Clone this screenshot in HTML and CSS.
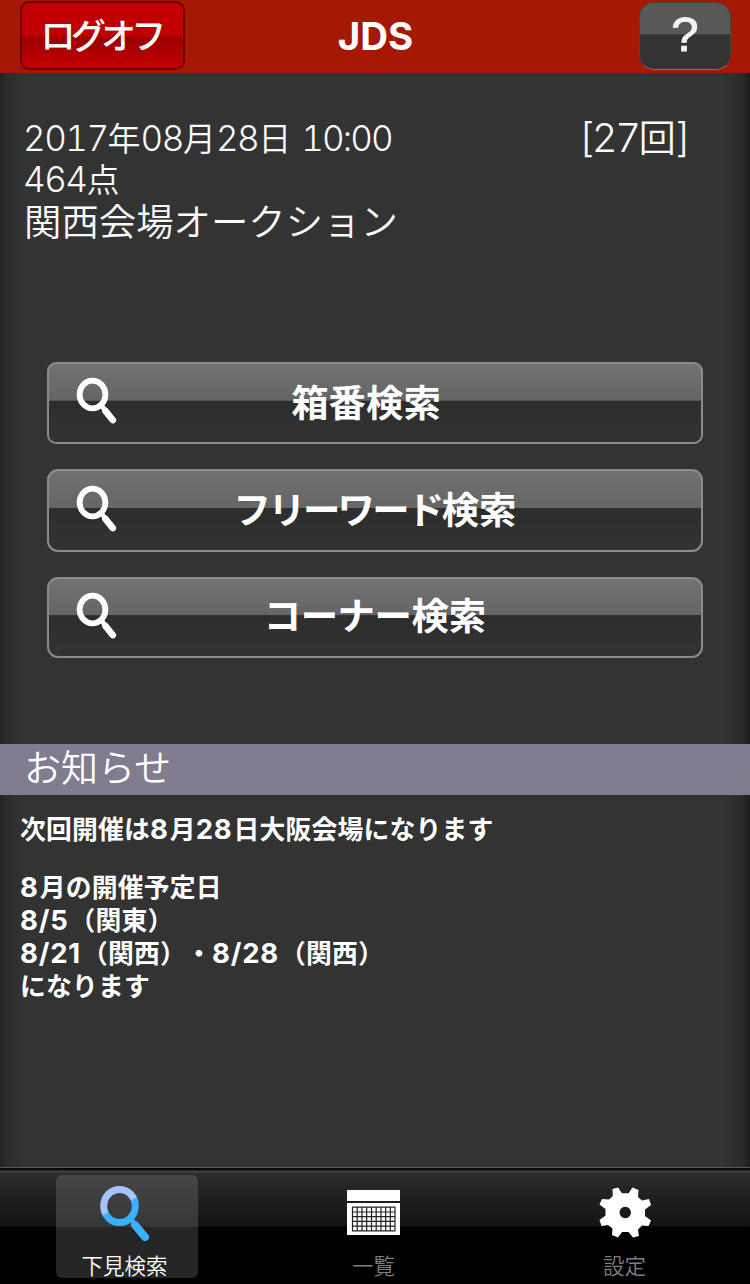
FILE: index.html
```html
<!DOCTYPE html>
<html lang="ja">
<head>
<meta charset="utf-8">
<title>JDS</title>
<link rel="stylesheet" href="styles.css">
</head>
<body>
<svg class="defs" width="0" height="0">
  <symbol id="lens" viewBox="0 0 42 47">
    <ellipse cx="16.500" cy="17.500" rx="12.900" ry="13.800" fill="none" stroke="#fff" stroke-width="5.800"/>
    <path d="M29.500 34 36.700 43" stroke="#fff" stroke-width="6.800" stroke-linecap="round"/>
    <path d="M25.500 28.500 29 33" stroke="#fff" stroke-width="4.500"/>
  </symbol>
</svg>
<header class="nav">
  <button class="logoff"><span>ログオフ</span></button>
  <h1 class="title">JDS</h1>
  <button class="help">?</button>
</header>
<main class="page">
  <section class="event">
    <div class="event-row">
      <p class="date"><span>2017<b>年</b>08<b>月</b>28<b>日</b></span><span class="time">10:00</span></p>
      <p class="round">[27<b>回</b>]</p>
    </div>
    <p class="points">464<b>点</b></p>
    <p class="venue">関西会場オークション</p>
  </section>
  <nav class="searches">
    <button class="search first"><svg class="lens"><use href="#lens"/></svg><span class="label">箱番検索</span></button>
    <button class="search"><svg class="lens"><use href="#lens"/></svg><span class="label"><span class="kana">フリーワード</span>検索</span></button>
    <button class="search last"><svg class="lens"><use href="#lens"/></svg><span class="label"><span class="kana wide">コーナー</span>検索</span></button>
  </nav>
  <h2 class="heading">お知らせ</h2>
  <section class="notice">
    <p class="lead">次回開催は<i>8</i>月<i>28</i>日大阪会場になります</p>
    <p><i>8</i>月の開催予定日</p>
    <p><i>8/5</i>（関東）</p>
    <p><i>8/21</i>（関西）・<i>8/28</i>（関西）</p>
    <p>になります</p>
  </section>
</main>
<footer class="tabs">
  <a class="tab active">
    <svg class="tab-icon" viewBox="0 0 54 58">
      <defs><linearGradient id="blue" x1="0" y1="0" x2=".5" y2="1"><stop offset=".58" stop-color="#a4c4fb"/><stop offset=".64" stop-color="#38b2ff"/></linearGradient></defs>
      <ellipse cx="21.500" cy="22" rx="15.800" ry="16.600" fill="none" stroke="url(#blue)" stroke-width="7"/>
      <path d="M32.500 35 36 39" stroke="#38b2ff" stroke-width="4.500"/>
      <path d="M37 41 47 53" stroke="#38b2ff" stroke-width="8" stroke-linecap="round"/>
    </svg>
    <span>下見検索</span>
  </a>
  <a class="tab">
    <svg class="tab-icon" viewBox="0 0 54 58">
      <path d="M0 6h53v11H0zM0 19h53v32H0z" fill="#fff"/>
      <path d="M5 23.200h43.500M5 28h43.500M5 32.700h43.500M5 37.400h43.500M5 42.100h43.500M5 46.800h43.500M5.500 23v24M10.200 23v24M15 23v24M19.700 23v24M24.500 23v24M29.200 23v24M34 23v24M38.700 23v24M43.300 23v24M48 23v24" stroke="#222" stroke-width="1.200"/>
    </svg>
    <span>一覧</span>
  </a>
  <a class="tab">
    <svg class="tab-icon" viewBox="0 0 54 58">
      <path fill="#fff" fill-rule="evenodd" d="M14.500 5 20 3.500 24 9.200H30.500L34.500 3.500 40.500 6 40 13 44 16.500 51 15 53 21 47 25.500V32L53 36.500 50.500 42 44 41.500 40 45.500 41 52 35 53.500 30.500 48H24L20 53.500 14 51 14.500 44.500 10 41 3.500 42 1.500 36 7.500 31.500V25L1.500 20.500 4 15 11 15.500 14.800 12ZM27.200 22.800a5.700 5.700 0 1 0 .1 0z"/>
    </svg>
    <span>設定</span>
  </a>
</footer>
</body>
</html>
```
FILE: styles.css
```css
* { box-sizing: border-box; margin: 0; padding: 0; }
body {
  width: 750px; height: 1284px; overflow: hidden;
  display: flex; flex-direction: column;
  background: #333; color: #fff;
  font-family: "Noto Sans CJK JP", sans-serif;
  white-space: nowrap;
}
button { font: inherit; color: inherit; border: 0; display: flex; align-items: center; }
.defs { position: absolute; }

.nav {
  flex: none; height: 73px; padding: 1px 19px 0 20px;
  display: grid; grid-template-columns: 165px 1fr 92px; align-items: start;
  background: #a51803;
}
.logoff {
  height: 69px; justify-content: center;
  border: 2px solid #6f0000; border-radius: 9px;
  background: linear-gradient(#c00000 0 50%, #9a0000 54%, #c00000 95%);
}
.logoff span { font-size: 35px; font-weight: 500; line-height: 40px; letter-spacing: -4.800px; margin: 0 0 4px -3px; }
.title { font: 700 38.500px/71px Inter, sans-serif; text-align: center; margin-right: 73px; }
.help {
  height: 68px; margin-top: 1px; justify-content: center;
  border: 1px solid #54403c; border-bottom-color: #9a6862; border-radius: 15px;
  background: linear-gradient(#585858 0 47%, #333 48%);
  font: 400 49px/60px "Liberation Sans", sans-serif; color: #f3f3f3;
  -webkit-text-stroke: 1px #f3f3f3;
  padding-bottom: 5px;
}

.page {
  flex: 1; display: flex; flex-direction: column;
  background: linear-gradient(90deg, #222 0, #2b2b2b 6px, #333 24px, #333 724px, #2b2b2b 742px, #1d1d1d 750px);
}
.event { padding: 43px 0 0 23px; height: 289px; font-family: Inter, "Noto Sans CJK JP", sans-serif; font-weight: 300; color: #fafafa; font-feature-settings: "tnum"; }
.event b { font: 350 33px/1 "Noto Sans CJK JP", sans-serif; letter-spacing: 0; }
.event-row { display: flex; justify-content: space-between; height: 42px; padding-right: 61px; }
.date, .points { font-size: 35px; line-height: 44px; letter-spacing: -1.500px; }
.date { display: flex; gap: 10px; }
.time { letter-spacing: -1.900px; }
.points { line-height: 42px; height: 41px; }
.round { font-size: 40px; line-height: 43px; letter-spacing: -2.400px; }
.round b { font-size: 37px; }
.venue { font: 350 37.400px/42px "Noto Sans CJK JP", sans-serif; margin-left: 1px; }

.searches { display: flex; flex-direction: column; gap: 25px; padding: 0 47px; height: 382px; }
.search {
  height: 83px; padding: 0 0 6px 27px; display: grid; grid-template-columns: 42px 1fr 69px;
  border: 2px solid #8b8b8b; border-radius: 11px;
  background: linear-gradient(#727272, #656565 46.500%, #2d2d2d 47.500%, #333);
}
.search.first { height: 82px; border-radius: 9px; grid-template-columns: 42px 1fr 87px; }
.search.first .label { padding-top: 2px; }
.search.last { height: 81px; }
.search.last .label { padding-bottom: 1px; }
.lens { width: 42px; height: 47px; margin-top: 2px; }
.first .lens { margin-top: 0; }
.label { font-size: 37.400px; font-weight: 700; line-height: 48px; text-align: center; }
.kana { letter-spacing: -2.700px; }
.kana.wide { letter-spacing: -.5px; }

.heading { height: 51px; padding-left: 24px; background: #817c90; font-size: 37px; font-weight: 350; line-height: 45px; }
.notice { padding: 16px 20px; font: 700 25.800px/33px "Noto Sans CJK JP", sans-serif; letter-spacing: .2px; text-spacing-trim: space-all; }
.notice i { font: 700 27.500px/1 Inter, sans-serif; letter-spacing: .8px; margin-right: 1px; }
.notice p { height: 33px; }
.notice .lead { height: 58px; }

.tabs {
  flex: none; height: 117px; padding: 7px 0 6px 56px;
  display: grid; grid-template-columns: repeat(3, 142px); column-gap: 107px;
  border-top: 1px solid #555;
  background: linear-gradient(#080808 0 2px, #444 3px, #2b2b2b 6px, #131313 58px, #000 59px);
}
.tab { display: flex; flex-direction: column; align-items: center; color: #7d7d7d; padding-right: 5px; }
.tab:last-child { padding-right: 1px; }
.tab-icon { width: 54px; height: 58px; margin-top: 9px; flex: none; }
.tab span { font-size: 21.500px; font-weight: 350; line-height: 26px; margin-top: 10px; }
.active { color: #fff; border-radius: 6px; background: linear-gradient(#454545, #373737 50%, #252525 51%); }
```
